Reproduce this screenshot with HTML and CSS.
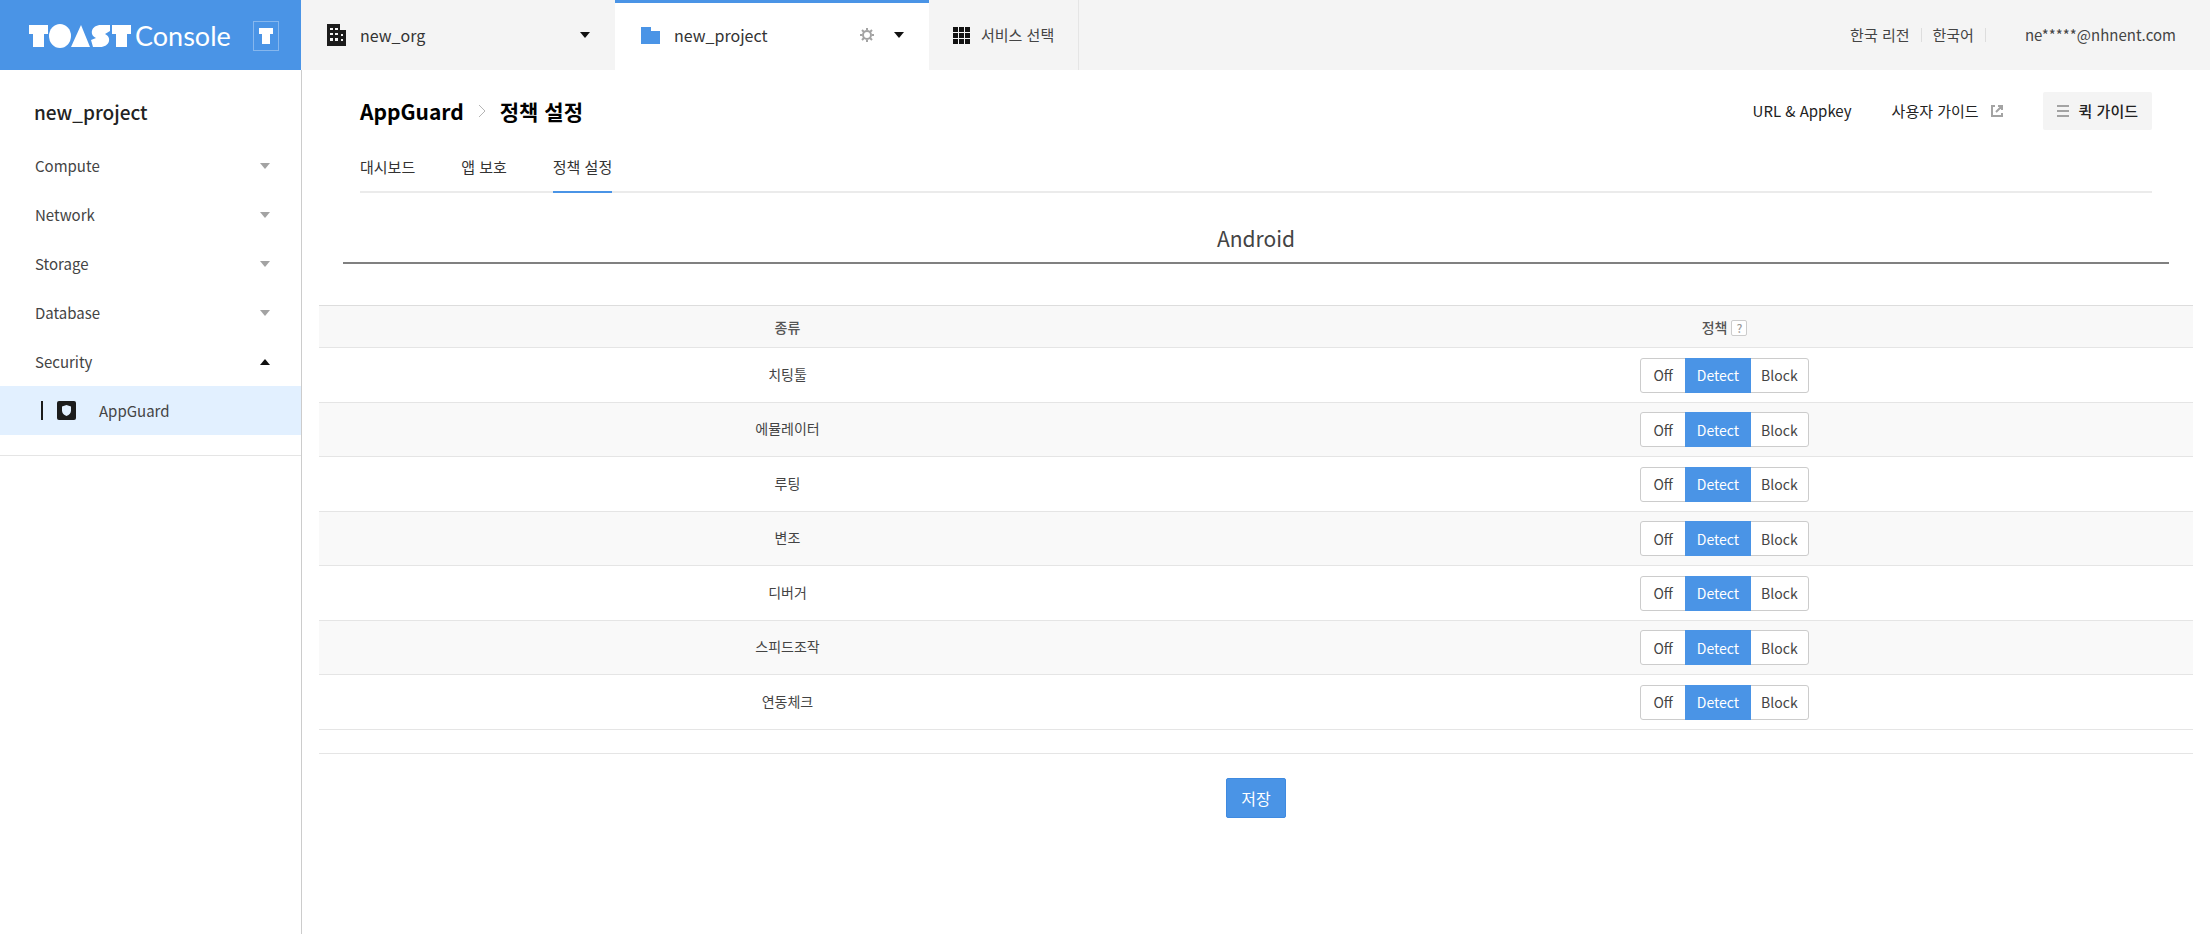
FILE: index.html
```
<!DOCTYPE html>
<html lang="ko">
<head>
    <meta charset="UTF-8">
    <meta name="viewport" content="width=device-width, initial-scale=1.0">
    <title>TOAST Console - AppGuard</title>
    <link rel="stylesheet" href="styles.css">
</head>
<body>
    <!-- Header -->
    <header class="header">
        <a class="logo" href="#">
            <svg class="logo-mark" viewBox="0 0 102 26" width="102" height="26" role="img" aria-label="TOAST">
                <rect x="0" y="2" width="19" height="9"/>
                <rect x="4" y="2" width="11" height="22"/>
                <ellipse cx="31" cy="13" rx="11" ry="12"/>
                <polygon points="52,2 61,24 42,24"/>
                <path d="M81 2H72C62 2 60 12 67 15L62 17L64 24H71C81 24 83 14 76 11L81 8Z"/>
                <rect x="83" y="2" width="19" height="9"/>
                <rect x="87" y="2" width="11" height="22"/>
            </svg>
            <span class="logo-text">Console</span>
            <span class="logo-badge">
                <svg viewBox="0 0 14 16" width="14" height="16" aria-hidden="true"><path d="M0 0H14V6H11V16H3V6H0Z"/></svg>
            </span>
        </a>
        <button type="button" class="tab tab-org">
            <svg class="tab-icon" viewBox="0 0 19 22" width="19" height="22" aria-hidden="true">
                <path d="M0 0H13V6H19V22H0Z" fill="#1c1c1c"/>
                <path d="M3 4h3v2H3zM8 4h3v2H8zM3 9h3v2H3zM8 9h3v2H8zM3 14h3v3H3zM8 14h3v3H8zM14 10h2v2h-2zM14 15h2v2h-2z" fill="#f4f4f4"/>
            </svg>
            <span class="tab-name">new_org</span>
            <span class="caret"></span>
        </button>
        <div class="tab tab-project">
            <svg class="tab-icon" viewBox="0 0 19 17" width="19" height="17" aria-hidden="true"><path d="M0 0H10V4H19V17H0Z" fill="#4a94e6"/></svg>
            <span class="tab-name">new_project</span>
            <button type="button" class="icon-button" aria-label="프로젝트 설정">
                <svg viewBox="0 0 14 14" width="14" height="14" fill="none" stroke="#a3a3a3" stroke-width="2" aria-hidden="true">
                    <circle cx="7" cy="7" r="4"/>
                    <path d="M7 0V2M7 12V14M0 7H2M12 7H14M2 2L4 4M10 10L12 12M12 2L10 4M4 10L2 12"/>
                </svg>
            </button>
            <button type="button" class="icon-button" aria-label="프로젝트 선택"><span class="caret"></span></button>
        </div>
        <button type="button" class="tab tab-service">
            <svg viewBox="0 0 17 17" width="17" height="17" aria-hidden="true">
                <path d="M0 0h5v5H0zM6 0h5v5H6zM12 0h5v5h-5zM0 6h5v5H0zM6 6h5v5H6zM12 6h5v5h-5zM0 12h5v5H0zM6 12h5v5H6zM12 12h5v5h-5z" fill="#111"/>
            </svg>
            <span>서비스 선택</span>
        </button>
        <nav class="user-menu">
            <a href="#">한국 리전</a>
            <a href="#">한국어</a>
            <a class="user-email" href="#">ne*****@nhnent.com</a>
        </nav>
    </header>

    <div class="layout">
        <!-- Sidebar -->
        <aside class="sidebar">
            <h2 class="project-name">new_project</h2>
            <nav class="side-menu">
                <button type="button" class="side-item">Compute <span class="caret caret-gray"></span></button>
                <button type="button" class="side-item">Network <span class="caret caret-gray"></span></button>
                <button type="button" class="side-item">Storage <span class="caret caret-gray"></span></button>
                <button type="button" class="side-item">Database <span class="caret caret-gray"></span></button>
                <button type="button" class="side-item" aria-expanded="true">Security <span class="caret caret-up"></span></button>
                <a class="side-link" href="#">
                    <span class="side-bar"></span>
                    <svg viewBox="0 0 19 19" width="19" height="19" aria-hidden="true">
                        <rect width="19" height="19" rx="2" fill="#1c1c1c"/>
                        <path d="M9.5 4L14 5.5V9.5Q14 13 9.5 15Q5 13 5 9.5V5.5Z" fill="#e2f0ff"/>
                    </svg>
                    AppGuard
                </a>
            </nav>
        </aside>

        <!-- Content -->
        <main class="content">
            <div class="page-head">
                <div class="title-row">
                    <h1 class="title">
                        AppGuard
                        <svg viewBox="0 0 8 14" width="8" height="14" fill="none" stroke="#b5b5b5" aria-hidden="true"><path d="M1 1L7 7L1 13"/></svg>
                        정책 설정
                    </h1>
                    <div class="title-links">
                        <a href="#">URL &amp; Appkey</a>
                        <a class="guide-link" href="#">
                            사용자 가이드
                            <svg viewBox="0 0 12 12" width="12" height="12" fill="none" stroke="#a3a3a3" stroke-width="2" aria-hidden="true"><path d="M4 1H1V11H11V8M7 1H11V5M11 1L5 7"/></svg>
                        </a>
                        <button type="button" class="quick-guide">
                            <svg viewBox="0 0 12 12" width="12" height="12" stroke="#a3a3a3" stroke-width="2" aria-hidden="true"><path d="M0 1H12M0 6H12M0 11H12"/></svg>
                            퀵 가이드
                        </button>
                    </div>
                </div>
                <nav class="page-tabs">
                    <a href="#">대시보드</a>
                    <a href="#">앱 보호</a>
                    <a class="active" href="#">정책 설정</a>
                </nav>
            </div>

            <h2 class="platform">Android</h2>

            <form class="policy-form">
                <table class="policy-table">
                    <thead>
                        <tr>
                            <th>종류</th>
                            <th>정책 <button type="button" class="help">?</button></th>
                        </tr>
                    </thead>
                    <tbody>
                        <tr>
                            <td>치팅툴</td>
                            <td><div class="btn-group"><button type="button">Off</button><button type="button" class="on">Detect</button><button type="button">Block</button></div></td>
                        </tr>
                        <tr>
                            <td>에뮬레이터</td>
                            <td><div class="btn-group"><button type="button">Off</button><button type="button" class="on">Detect</button><button type="button">Block</button></div></td>
                        </tr>
                        <tr>
                            <td>루팅</td>
                            <td><div class="btn-group"><button type="button">Off</button><button type="button" class="on">Detect</button><button type="button">Block</button></div></td>
                        </tr>
                        <tr>
                            <td>변조</td>
                            <td><div class="btn-group"><button type="button">Off</button><button type="button" class="on">Detect</button><button type="button">Block</button></div></td>
                        </tr>
                        <tr>
                            <td>디버거</td>
                            <td><div class="btn-group"><button type="button">Off</button><button type="button" class="on">Detect</button><button type="button">Block</button></div></td>
                        </tr>
                        <tr>
                            <td>스피드조작</td>
                            <td><div class="btn-group"><button type="button">Off</button><button type="button" class="on">Detect</button><button type="button">Block</button></div></td>
                        </tr>
                        <tr>
                            <td>연동체크</td>
                            <td><div class="btn-group"><button type="button">Off</button><button type="button" class="on">Detect</button><button type="button">Block</button></div></td>
                        </tr>
                    </tbody>
                </table>
                <div class="form-footer">
                    <button type="submit" class="save">저장</button>
                </div>
            </form>
        </main>
    </div>
</body>
</html>
```
FILE: styles.css
```
/* General Reset */
* {
    margin: 0;
    padding: 0;
    box-sizing: border-box;
}

body {
    display: flex;
    flex-direction: column;
    min-height: 100vh;
    font-family: "Noto Sans CJK KR", sans-serif;
    font-size: 15px;
    line-height: 20px;
    color: #444;
    background-color: #fff;
}

a {
    color: inherit;
    text-decoration: none;
}

button {
    font: inherit;
    color: inherit;
    background: none;
    border: 0;
    cursor: pointer;
}

svg {
    flex-shrink: 0;
}

.caret {
    border: 5px solid transparent;
    border-top: 6px solid #111;
    border-bottom: 0;
}

.caret-gray {
    border-top-color: #a3a3a3;
}

.caret-up {
    border-top: 0;
    border-bottom: 6px solid #111;
}

/* Header */
.header {
    display: flex;
    height: 70px;
    background-color: #f4f4f4;
}

.logo {
    display: flex;
    align-items: center;
    width: 301px;
    padding: 2px 22px 0 29px;
    color: #fff;
    background-color: #4a94e6;
}

.logo svg {
    fill: #fff;
}

.logo-text {
    margin-left: 4px;
    font-family: Lato, sans-serif;
    font-size: 27px;
}

.logo-badge {
    display: flex;
    align-items: center;
    justify-content: center;
    width: 26px;
    height: 30px;
    margin-left: auto;
    border: 1px solid #86b7ee;
}

.tab {
    display: flex;
    align-items: center;
    text-align: left;
}

.tab-org,
.tab-project {
    width: 314px;
    font-size: 16px;
    color: #333;
}

.tab-org {
    padding: 0 25px 0 26px;
}

.tab-project {
    padding: 0 20px 3px 26px;
    border-top: 3px solid #4a94e6;
    background-color: #fff;
}

.tab-name {
    flex: 1;
    margin-left: 14px;
}

.icon-button {
    display: flex;
    padding: 5px;
    margin-left: 10px;
}

.tab-service {
    gap: 11px;
    padding: 0 24px;
    border-right: 1px solid #e5e5e5;
}

.user-menu {
    display: flex;
    align-items: center;
    margin-left: auto;
    padding-right: 34px;
}

.user-menu a {
    line-height: 14px;
    padding: 0 11px;
    border-right: 1px solid #ddd;
}

.user-menu .user-email {
    padding: 0 0 0 39px;
    border: 0;
}

/* Layout */
.layout {
    display: flex;
    flex: 1;
}

/* Sidebar */
.sidebar {
    width: 302px;
    border-right: 1px solid #ccc;
}

.project-name {
    padding: 32px 34px 19px;
    font-size: 19px;
    font-weight: 500;
    line-height: 20px;
    color: #222;
}

.side-menu {
    display: flex;
    flex-direction: column;
    padding-bottom: 20px;
    border-bottom: 1px solid #e5e5e5;
}

.side-item {
    display: flex;
    align-items: center;
    justify-content: space-between;
    height: 49px;
    padding: 0 31px 0 35px;
}

.side-link {
    display: flex;
    align-items: center;
    height: 49px;
    padding-left: 41px;
    background-color: #e2f0ff;
}

.side-link svg {
    margin: 0 23px 0 14px;
}

.side-bar {
    width: 2px;
    height: 19px;
    background-color: #1c1c1c;
}

/* Content */
.content {
    flex: 1;
    padding: 22px 17px 0;
}

.page-head {
    padding: 0 41px;
}

.title-row {
    display: flex;
    align-items: center;
    justify-content: space-between;
}

.title {
    display: flex;
    align-items: center;
    gap: 14px;
    font-size: 21px;
    font-weight: 700;
    color: #000;
}

.title-links {
    display: flex;
    align-items: center;
    gap: 40px;
    color: #222;
}

.guide-link,
.quick-guide {
    display: flex;
    align-items: center;
    gap: 12px;
}

.quick-guide {
    gap: 10px;
    height: 38px;
    padding: 0 14px;
    border-radius: 2px;
    font-weight: 500;
    background-color: #f4f4f4;
}

.page-tabs {
    display: flex;
    gap: 46px;
    margin-top: 17px;
    border-bottom: 2px solid #ebebeb;
    color: #333;
}

.page-tabs a {
    padding: 10px 0 14px;
    margin-bottom: -2px;
    border-bottom: 2px solid transparent;
}

.page-tabs .active {
    border-color: #4a94e6;
}

.platform {
    margin: 30px 24px 0;
    padding-bottom: 9px;
    border-bottom: 2px solid #808080;
    font-size: 21px;
    font-weight: 400;
    line-height: 30px;
    text-align: center;
}

/* Policy table */
.policy-form {
    margin-top: 41px;
    font-size: 14px;
}

.policy-table {
    width: 100%;
    table-layout: fixed;
    border-collapse: collapse;
    text-align: center;
}

.policy-table th {
    height: 42px;
    border-top: 1px solid #ddd;
    font-weight: 500;
    color: #555;
    background-color: #f8f8f8;
}

.policy-table td {
    height: 55px;
    border-top: 1px solid #e5e5e5;
}

.policy-table td:first-child {
    padding-bottom: 3px;
}

.policy-table tbody {
    border-bottom: 1px solid #e5e5e5;
}

.policy-table tbody tr:nth-child(even) {
    background-color: #f9f9f9;
}

.policy-table tbody tr:nth-child(even) td {
    height: 54px;
}

.help {
    width: 16px;
    height: 16px;
    border: 1px solid #ccc;
    border-radius: 2px;
    font-size: 12px;
    line-height: 14px;
    color: #999;
    background-color: #fff;
}

.btn-group {
    display: inline-flex;
    height: 35px;
    border: 1px solid #ccc;
    border-radius: 3px;
    background-color: #fff;
    vertical-align: middle;
}

.btn-group button {
    padding: 0 12px;
}

.btn-group button:last-child {
    padding: 0 10px;
}

.btn-group .on {
    margin: -1px 0;
    color: #fff;
    background-color: #4a94e6;
}

.form-footer {
    display: flex;
    justify-content: center;
    margin-top: 23px;
    padding-top: 24px;
    border-top: 1px solid #e5e5e5;
}

.save {
    height: 40px;
    padding: 0 14px;
    border: 1px solid #3f8ae0;
    border-radius: 2px;
    font-size: 16px;
    color: #fff;
    background-color: #4a94e6;
}
```
